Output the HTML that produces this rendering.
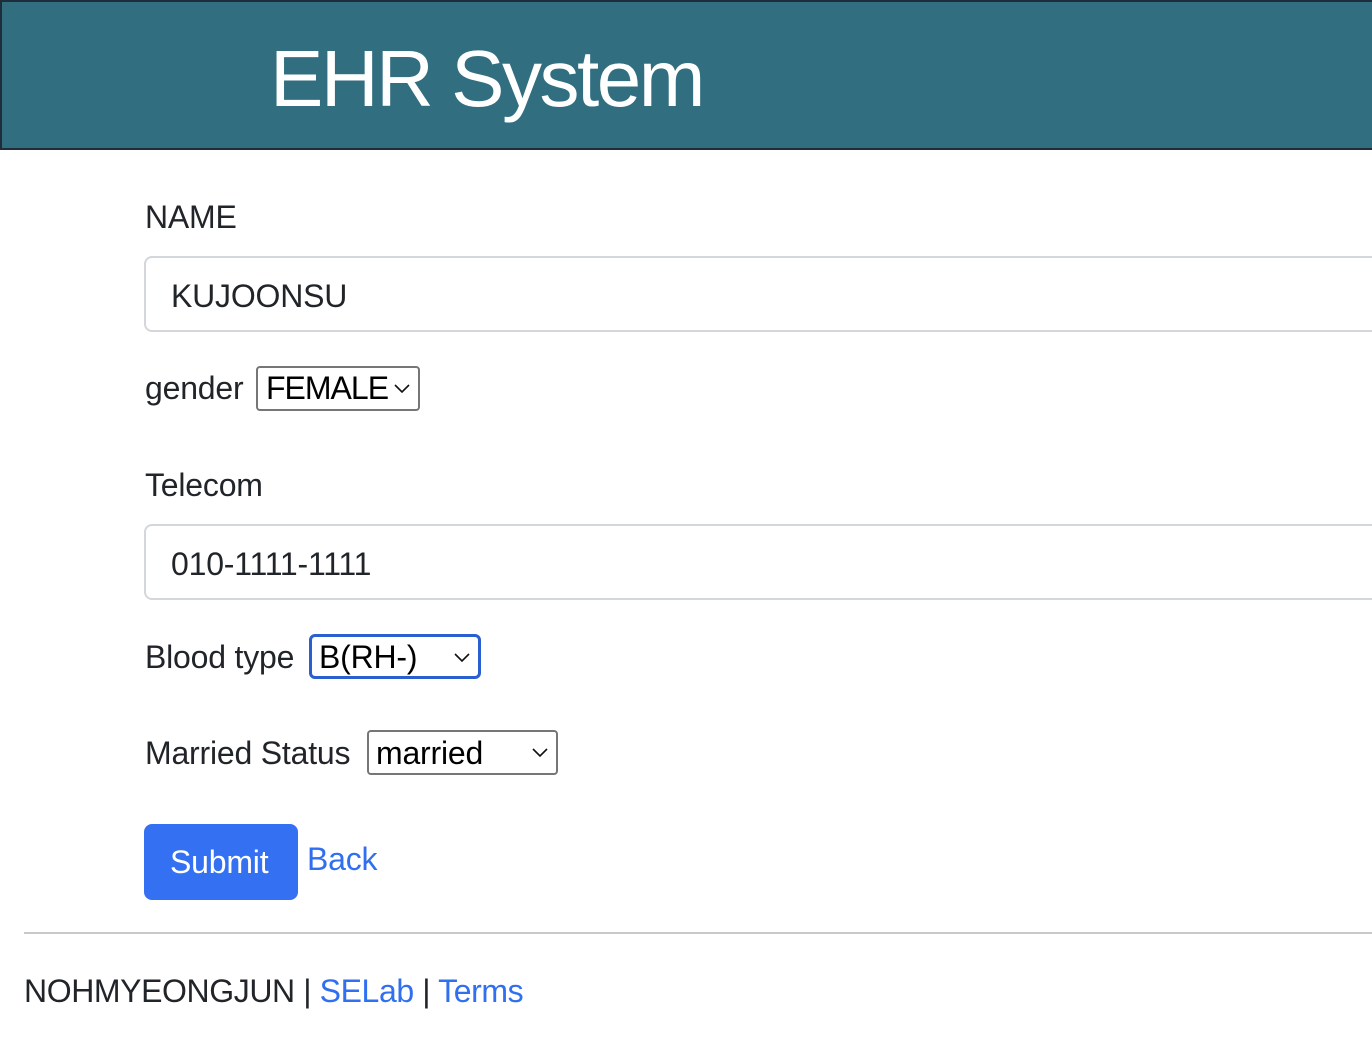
<!DOCTYPE html>
<html><head><meta charset="utf-8"><style>
*{margin:0;padding:0;box-sizing:border-box}
body{width:1372px;height:1038px;overflow:hidden;background:#fff;font-family:"Liberation Sans",sans-serif;color:#212529;position:relative}
.a{position:absolute;font-size:32px;line-height:32px;white-space:nowrap;letter-spacing:-0.2px}
.hdr{position:absolute;left:0;top:0;width:1374px;height:150px;background:#306e80;border:2px solid #1f2d3a}
.title{position:absolute;left:270px;top:39px;font-size:80px;line-height:80px;color:#fff;letter-spacing:-2.5px}
.inp{position:absolute;left:144px;width:1300px;height:76px;border:2px solid #d3d7db;border-radius:8px}
.sel{position:absolute;border:2px solid #767676;border-radius:4px;height:45px}
.sel .c{position:absolute;right:7px;top:14px}
a{color:#2f6ff0;text-decoration:none}
</style></head><body>
<div class="hdr"></div>
<div class="title">EHR System</div>

<div class="a" style="left:145px;top:201px">NAME</div>
<div class="inp" style="top:256px"></div>
<div class="a" style="left:171px;top:280px">KUJOONSU</div>

<div class="a" style="left:145px;top:372px">gender</div>
<div class="sel" style="left:256px;top:366px;width:164px"><svg class="c" width="18" height="12" viewBox="0 0 18 12"><path d="M2 3l7 7 7-7" fill="none" stroke="#111" stroke-width="1.6"/></svg></div>
<div class="a" style="left:266px;top:372px;color:#000;letter-spacing:-1px">FEMALE</div>

<div class="a" style="left:145px;top:469px">Telecom</div>
<div class="inp" style="top:524px"></div>
<div class="a" style="left:171px;top:548px">010-1111-1111</div>

<div class="a" style="left:145px;top:641px">Blood type</div>
<div class="sel" style="left:309px;top:634px;width:172px;height:45px;border:3px solid #2a5fd0;border-radius:6px"><svg class="c" width="18" height="12" viewBox="0 0 18 12"><path d="M2 3l7 7 7-7" fill="none" stroke="#111" stroke-width="1.6"/></svg></div>
<div class="a" style="left:319px;top:641px;color:#000">B(RH-)</div>

<div class="a" style="left:145px;top:737px">Married Status</div>
<div class="sel" style="left:367px;top:730px;width:191px"><svg class="c" width="18" height="12" viewBox="0 0 18 12"><path d="M2 3l7 7 7-7" fill="none" stroke="#111" stroke-width="1.6"/></svg></div>
<div class="a" style="left:376px;top:737px;color:#000">married</div>

<div style="position:absolute;left:144px;top:824px;width:154px;height:76px;background:#3470f2;border-radius:8px"></div>
<div class="a" style="left:170px;top:846px;color:#fff">Submit</div>
<div class="a" style="left:307px;top:843px"><a>Back</a></div>

<div style="position:absolute;left:24px;top:932px;width:1348px;height:2px;background:#c8c8c8"></div>
<div class="a" style="left:24px;top:975px;letter-spacing:-0.4px">NOHMYEONGJUN | <a>SELab</a> | <a>Terms</a></div>
</body></html>
